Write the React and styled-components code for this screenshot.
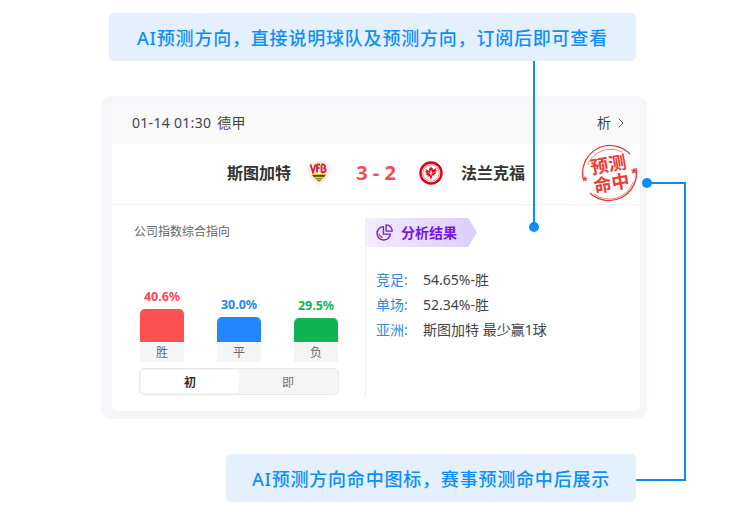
import React from 'react';
import styled, { createGlobalStyle } from 'styled-components';
import { FiChevronRight } from 'react-icons/fi';

const GlobalStyle = createGlobalStyle`
  html, body {
    margin: 0;
    padding: 0;
    background: #fff;
  }
  body {
    font-family: "Noto Sans", "Noto Sans CJK SC", sans-serif;
  }
`;

const Page = styled.div`
  position: relative;
  width: 739px;
  height: 505px;
  padding-top: 13px;
  box-sizing: border-box;
  overflow: hidden;
`;

const Callout = styled.div`
  margin-left: ${(p) => p.$left}px;
  width: ${(p) => p.$width}px;
  height: 48px;
  box-sizing: border-box;
  display: flex;
  align-items: center;
  justify-content: center;
  background: #e4f0fe;
  border-radius: 5px;
  color: #0b8ffb;
  font-size: 18px;
  font-weight: 500;
  letter-spacing: 0.8px;
  white-space: nowrap;
`;

const Frame = styled.div`
  margin: 35px 0 35px 101px;
  width: 546px;
  height: 323px;
  box-sizing: border-box;
  padding: 7px 7px 7px 11px;
  background: #f5f6f9;
  border-radius: 10px;
`;

const Card = styled.div`
  height: 100%;
  box-sizing: border-box;
  background: #fff;
  border-radius: 7px;
  border-bottom: 1px solid #f8f1fa;
  overflow: hidden;
  display: flex;
  flex-direction: column;
`;

const Header = styled.div`
  height: 41px;
  flex: none;
  box-sizing: border-box;
  display: flex;
  align-items: center;
  justify-content: space-between;
  padding: 0 11px 1px 20px;
  background: #f9f9fa;
  color: #444;
  font-size: 14px;
  line-height: 20px;
`;

const HeaderInfo = styled.div`
  display: flex;
  align-items: center;
  gap: 6px;
  letter-spacing: 0.3px;
`;

const HeaderLink = styled.div`
  display: flex;
  align-items: center;
  gap: 2px;
`;

const MatchRow = styled.div`
  height: 61px;
  flex: none;
  box-sizing: border-box;
  border-bottom: 1px solid #f5eff9;
  display: flex;
  align-items: center;
  padding: 0 0 2px 115px;
`;

const Team = styled.div`
  font-size: 16px;
  line-height: 22px;
  font-weight: 700;
  color: #333;
  white-space: nowrap;
`;

const Crest = styled.svg`
  width: 24px;
  height: 24px;
  flex: none;
  margin: ${(p) => p.$margin};
`;

const Score = styled.div`
  width: 58px;
  text-align: center;
  font-size: 20px;
  line-height: 24px;
  font-weight: 700;
  color: #fb4a4e;
  white-space: nowrap;
`;

const Body = styled.div`
  flex: 1;
  display: flex;
  min-height: 0;
`;

const Left = styled.div`
  width: 254px;
  flex: none;
  box-sizing: border-box;
  margin-top: 13px;
  height: 179px;
  border-right: 1px solid #f0eef6;
  padding: 6px 26px 0 27px;
  display: flex;
  flex-direction: column;
`;

const SectionTitle = styled.div`
  margin-left: -5px;
  font-size: 12px;
  line-height: 16px;
  color: #666;
`;

const Bars = styled.div`
  height: 122px;
  flex: none;
  display: flex;
  align-items: flex-end;
  justify-content: space-between;
  margin: 0 1px;
`;

const BarColumn = styled.div`
  width: 44px;
  display: flex;
  flex-direction: column;
  align-items: center;
`;

const Percent = styled.div`
  font-size: 12.5px;
  line-height: 14px;
  font-weight: 700;
  margin-bottom: 5px;
  white-space: nowrap;
  color: ${(p) => p.$color};
`;

const Bar = styled.div`
  width: 100%;
  height: ${(p) => p.$height}px;
  background: ${(p) => p.$color};
  border-radius: 5px 5px 0 0;
`;

const BarLabel = styled.div`
  width: 100%;
  height: 19px;
  margin-top: 1px;
  background: #f5f5f5;
  color: #666;
  font-size: 12px;
  line-height: 19px;
  text-align: center;
`;

const Toggle = styled.div`
  margin-top: 6px;
  height: 27px;
  box-sizing: border-box;
  display: flex;
  padding: 1px;
  background: #f5f5f5;
  border: 1px solid #e8e8e8;
  border-radius: 5px;
`;

const ToggleItem = styled.div`
  flex: 1;
  display: flex;
  align-items: center;
  justify-content: center;
  font-size: 12px;
  border-radius: 4px;
  background: ${(p) => (p.$active ? '#fff' : 'transparent')};
  color: ${(p) => (p.$active ? '#333' : '#777')};
  font-weight: ${(p) => (p.$active ? 700 : 400)};
`;

const Right = styled.div`
  flex: 1;
  padding-top: 13px;
`;

const ResultTag = styled.div`
  width: 111px;
  height: 29px;
  box-sizing: border-box;
  display: flex;
  align-items: center;
  gap: 8px;
  padding-left: 10px;
  background: linear-gradient(90deg, #f3edff, #dccdfd);
  clip-path: polygon(0 0, 102px 0, 100% 50%, 102px 100%, 0 100%);
  color: #7a16e6;
  font-size: 14px;
  line-height: 20px;
  font-weight: 700;
  white-space: nowrap;
`;

const ResultList = styled.div`
  margin: 23px 0 0 10px;
  display: flex;
  flex-direction: column;
  gap: 5px;
`;

const ResultRow = styled.div`
  display: flex;
  font-size: 14px;
  line-height: 20px;
  color: #444;
  white-space: nowrap;
`;

const ResultLabel = styled.span`
  width: 47px;
  flex: none;
  color: #2b8de6;
`;

const Stamp = styled.div`
  position: absolute;
  left: 580px;
  top: 144px;
  width: 60px;
  height: 60px;
`;

const StampRing = styled.svg`
  position: absolute;
  inset: 0;
  width: 60px;
  height: 60px;
`;

const StampText = styled.div`
  position: absolute;
  inset: 0;
  display: flex;
  flex-direction: column;
  align-items: center;
  justify-content: center;
  transform: rotate(-10deg);
  color: #ee3b33;
  font-size: 18px;
  line-height: 19px;
  font-weight: 700;
  white-space: nowrap;
`;

const Line = styled.div`
  position: absolute;
  background: #0b8df5;
  left: ${(p) => p.$x}px;
  top: ${(p) => p.$y}px;
  width: ${(p) => p.$w}px;
  height: ${(p) => p.$h}px;
`;

const Dot = styled.div`
  position: absolute;
  left: ${(p) => p.$x - 5}px;
  top: ${(p) => p.$y - 5}px;
  width: 10px;
  height: 10px;
  border-radius: 50%;
  background: #0b8df5;
`;

const bars = [
  { label: '胜', value: '40.6%', color: '#fe5050', text: '#fb4a4e', height: 33 },
  { label: '平', value: '30.0%', color: '#2287fd', text: '#2287fd', height: 25 },
  { label: '负', value: '29.5%', color: '#0fb554', text: '#0fb554', height: 24 },
];

const results = [
  { label: '竞足:', value: '54.65%-胜' },
  { label: '单场:', value: '52.34%-胜' },
  { label: '亚洲:', value: '斯图加特 最少赢1球' },
];

const StuttgartCrest = () => (
  <Crest viewBox="0 0 24 24" $margin="0 16px">
    <path d="M12 .5C7 .5 2 2 1.500 7c-.3 6 4 13 10.500 16.500C18.500 20 22.800 13 22.500 7 22 2 17 .5 12 .5z" fill="#fdeeee" stroke="#f3dcde" strokeWidth=".7" />
    <path d="M3.500 3.500l2.500 8 2.500-8M9.500 3.500h3.500M9.800 7h2.700M10 3.500v8M14.500 3.500v8M14.500 3.500c3.500-.5 5 2.500 2 3.800 3.500 .3 3 4.200-2 4.200" fill="none" stroke="#d81e2c" strokeWidth="1.800" />
    <path d="M5 13h14c-1.500 3.500-3.500 6-7 8.500C8.500 19 6.500 16.500 5 13z" fill="#e6c62d" />
    <path d="M5.500 14h13l-.7 1.800H6.200z" fill="#44442e" />
    <path d="M9 17.700h6M10.500 19.500h3" stroke="#7a6716" strokeWidth=".8" />
  </Crest>
);

const FrankfurtCrest = () => (
  <Crest viewBox="0 0 24 24" $margin="0 18px 0 14px">
    <circle cx="12" cy="12" r="10.500" fill="#fff" stroke="#e1000f" strokeWidth="2.400" />
    <circle cx="12" cy="12" r="8.200" fill="none" stroke="#e1000f" strokeWidth=".5" />
    <path d="M12 5l1 2.500 1-.5-.4 2 3.900-2-1.100 2.400 2 .1-2.500 2 1.800.6-2.700 1.200.8 1.300-2.300-.4L12 19l-1.500-3.900-2.300.4.800-1.300-2.700-1.200 1.800-.6-2.500-2 2-.1L6.500 7.900l3.900 2L10 7l1 .5z" fill="#e1000f" />
    <path d="M12 8.500l.8 3-.8 4-.8-4z" fill="#fff" />
    <path d="M8.500 11l3.500 2 3.500-2" fill="none" stroke="#fff" strokeWidth=".6" />
  </Crest>
);

const PieIcon = () => (
  <svg width="17" height="17" viewBox="0 0 16 16" fill="none">
    <path d="M7 2.500a6.300 6.300 0 1 0 6.500 7H7z" stroke="#7a16e6" strokeWidth="1.300" strokeLinejoin="round" />
    <path d="M9.500 .8c3.200 0 5.800 2.600 5.800 5.900H9.500z" stroke="#7a16e6" strokeWidth="1.300" strokeLinejoin="round" />
    <path d="M3 9.500c.3 1.500 1.300 2.500 2.800 3" stroke="#f0353f" strokeWidth="1.300" strokeLinecap="round" />
  </svg>
);

const star = 'M0-3.200.8-1 3-1 1.200.3 1.900 2.500 0 1.200-1.900 2.500-1.200.3-3-1-.8-1z';

const App = () => (
  <Page>
    <GlobalStyle />
    <Callout $left={109} $width={527}>AI预测方向，直接说明球队及预测方向，订阅后即可查看</Callout>
    <Frame>
      <Card>
        <Header>
          <HeaderInfo>
            <span>01-14 01:30</span>
            <span>德甲</span>
          </HeaderInfo>
          <HeaderLink>
            析
            <FiChevronRight size={16} strokeWidth={1.500} color="#555" />
          </HeaderLink>
        </Header>
        <MatchRow>
          <Team>斯图加特</Team>
          <StuttgartCrest />
          <Score>3 - 2</Score>
          <FrankfurtCrest />
          <Team>法兰克福</Team>
        </MatchRow>
        <Body>
          <Left>
            <SectionTitle>公司指数综合指向</SectionTitle>
            <Bars>
              {bars.map((item) => (
                <BarColumn key={item.label}>
                  <Percent $color={item.text}>{item.value}</Percent>
                  <Bar $color={item.color} $height={item.height} />
                  <BarLabel>{item.label}</BarLabel>
                </BarColumn>
              ))}
            </Bars>
            <Toggle>
              <ToggleItem $active>初</ToggleItem>
              <ToggleItem>即</ToggleItem>
            </Toggle>
          </Left>
          <Right>
            <ResultTag>
              <PieIcon />
              分析结果
            </ResultTag>
            <ResultList>
              {results.map((item) => (
                <ResultRow key={item.label}>
                  <ResultLabel>{item.label}</ResultLabel>
                  {item.value}
                </ResultRow>
              ))}
            </ResultList>
          </Right>
        </Body>
      </Card>
    </Frame>
    <Callout $left={226} $width={410}>AI预测方向命中图标，赛事预测命中后展示</Callout>

    <Stamp>
      <StampRing viewBox="0 0 60 60" fill="none">
        <path d="M3.500 36A27.500 27.500 0 0 1 50 10" stroke="#ee3b33" strokeWidth="1.300" />
        <path d="M56 24A27.500 27.500 0 0 1 10 49" stroke="#ee3b33" strokeWidth="1.300" />
        <path d="M14 50A25 25 0 0 0 53 38" stroke="#f3827c" strokeWidth="1" />
        <path d="M7.500 21A25 25 0 0 1 42 8" stroke="#f3827c" strokeWidth="1" />
        <path d={star} fill="#ee3b33" transform="translate(5 35)" />
        <path d={star} fill="#ee3b33" transform="translate(54 27) scale(1.200)" />
      </StampRing>
      <StampText>
        <span>预测</span>
        <span>命中</span>
      </StampText>
    </Stamp>

    <Line $x={533} $y={61} $w={2} $h={166} />
    <Dot $x={534} $y={227} />
    <Dot $x={647} $y={183} />
    <Line $x={647} $y={182} $w={39} $h={2} />
    <Line $x={684} $y={182} $w={2} $h={299} />
    <Line $x={636} $y={479} $w={50} $h={2} />
  </Page>
);

export default App;
